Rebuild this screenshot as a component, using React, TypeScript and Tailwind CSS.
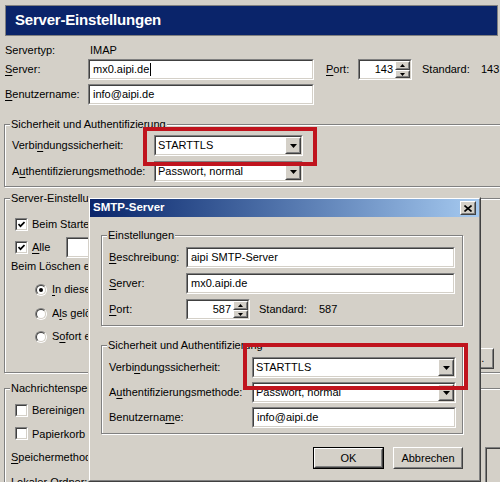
import type { ReactNode } from "react";

// Windows-classic look: 3D borders, etched group boxes, navy caption bars.

function U({ children }: { children: ReactNode }) {
  return <span className="underline underline-offset-[2px]">{children}</span>;
}

// label that is partly covered by the dialog window; only the uncovered part is drawn
function Clip({ width, children }: { width: string; children: ReactNode }) {
  return <span className={`block overflow-hidden whitespace-nowrap ${width}`}>{children}</span>;
}

function Sunken({
  className = "",
  disabled = false,
  children,
}: {
  className?: string;
  disabled?: boolean;
  children?: ReactNode;
}) {
  return (
    <div className={`border border-t-[#808080] border-l-[#808080] border-b-white border-r-white ${className}`}>
      <div
        className={`flex h-full w-full border border-t-[#404040] border-l-[#404040] border-b-[#d4d0c8] border-r-[#d4d0c8] ${
          disabled ? "bg-[#d4d0c8]" : "bg-white"
        }`}
      >
        {children}
      </div>
    </div>
  );
}

function Raised({ className = "", children }: { className?: string; children?: ReactNode }) {
  return (
    <div className={`border border-t-white border-l-white border-b-[#404040] border-r-[#404040] bg-[#d4d0c8] ${className}`}>
      <div className="flex h-full w-full items-center justify-center border border-t-[#d4d0c8] border-l-[#d4d0c8] border-b-[#808080] border-r-[#808080]">
        {children}
      </div>
    </div>
  );
}

function TextField({ value, width, caret = false }: { value: string; width: string; caret?: boolean }) {
  return (
    <Sunken className={`h-[21px] ${width}`}>
      <span className="pl-[3px] leading-[17px] whitespace-nowrap">{value}</span>
      {caret && <span className="mt-[2px] ml-[1px] h-[13px] w-px bg-black" />}
    </Sunken>
  );
}

function DownArrow() {
  return (
    <svg width="7" height="4" viewBox="0 0 7 4">
      <polygon points="0,0 7,0 3.5,4" fill="#000" />
    </svg>
  );
}

function ComboBox({ value, width }: { value: string; width: string }) {
  return (
    <Sunken className={`h-[21px] ${width}`}>
      <span className="flex-1 pl-[2px] leading-[17px] whitespace-nowrap">{value}</span>
      <Raised className="h-[17px] w-[16px]">
        <DownArrow />
      </Raised>
    </Sunken>
  );
}

function SpinBox({ value, width }: { value: string; width: string }) {
  return (
    <Sunken className={`h-[21px] ${width}`}>
      <span className="flex-1 pr-[2px] text-right leading-[17px]">{value}</span>
      <div className="flex w-[15px] flex-col">
        <Raised className="h-[9px]">
          <svg width="5" height="3" viewBox="0 0 5 3">
            <polygon points="2.5,0 5,3 0,3" fill="#000" />
          </svg>
        </Raised>
        <Raised className="h-[8px]">
          <svg width="5" height="3" viewBox="0 0 5 3">
            <polygon points="0,0 5,0 2.5,3" fill="#000" />
          </svg>
        </Raised>
      </div>
    </Sunken>
  );
}

function CheckBox({ checked }: { checked?: boolean }) {
  return (
    <Sunken className="h-[13px] w-[13px] shrink-0">
      {checked && (
        <svg className="m-auto" width="7" height="7" viewBox="0 0 7 7">
          <polyline points="0.5,3 2.5,5.2 6.5,1" fill="none" stroke="#000" strokeWidth="1.7" />
        </svg>
      )}
    </Sunken>
  );
}

function Radio({ checked }: { checked?: boolean }) {
  return (
    <div className="flex h-[12px] w-[12px] shrink-0 rounded-full border border-t-[#808080] border-l-[#808080] border-b-white border-r-white">
      <div className="flex h-full w-full items-center justify-center rounded-full border border-t-[#404040] border-l-[#404040] border-b-[#d4d0c8] border-r-[#d4d0c8] bg-white">
        {checked && <div className="h-[4px] w-[4px] rounded-full bg-black" />}
      </div>
    </div>
  );
}

function GroupBox({
  label,
  labelWidth = "",
  className = "",
  children,
}: {
  label: string;
  labelWidth?: string;
  className?: string;
  children?: ReactNode;
}) {
  return (
    <div className={`relative border border-[#808080] shadow-[inset_1px_1px_0_#fff,1px_1px_0_#fff] ${className}`}>
      <span
        className={`absolute left-[5px] -top-[8px] overflow-hidden bg-[#d4d0c8] px-[1px] leading-[14px] whitespace-nowrap ${labelWidth}`}
      >
        {label}
      </span>
      {children}
    </div>
  );
}

function PushButton({ label, primary = false }: { label: string; primary?: boolean }) {
  const btn = (
    <Raised className="h-full w-full">
      <span className="leading-[14px]">{label}</span>
    </Raised>
  );
  return primary ? (
    <div className="h-[22px] w-[71px] border border-black">{btn}</div>
  ) : (
    <div className="h-[22px] w-[70px]">{btn}</div>
  );
}

function SmtpDialog() {
  return (
    <div className="absolute left-[88px] top-[197px] h-[285px] w-[393px] border border-t-[#d4d0c8] border-l-[#d4d0c8] border-b-[#404040] border-r-[#404040]">
      <div className="flex h-full w-full flex-col border border-t-white border-l-white border-b-[#808080] border-r-[#808080] bg-[#d4d0c8]">
        <div className="flex h-[18px] items-center bg-gradient-to-r from-[#0a246a] to-[#a6caf0] pl-[3px] pr-[3px]">
          <span className="flex-1 text-[11.5px] font-bold text-white">SMTP-Server</span>
          <Raised className="h-[14px] w-[16px]">
            <svg width="8" height="7" viewBox="0 0 8 7">
              <path d="M0.5 0.5 L7.5 6.5 M7.5 0.5 L0.5 6.5" stroke="#000" strokeWidth="1.6" />
            </svg>
          </Raised>
        </div>

        <GroupBox label="Einstellungen" className="ml-[11px] mt-[18px] h-[91px] w-[362px]">
          <div className="flex flex-col gap-[5px] pl-[7px] pt-[11px]">
            <div className="flex items-center">
              <span className="w-[77px]"><U>B</U>eschreibung:</span>
              <TextField value="aipi SMTP-Server" width="w-[269px]" />
            </div>
            <div className="flex items-center">
              <span className="w-[77px]"><U>S</U>erver:</span>
              <TextField value="mx0.aipi.de" width="w-[269px]" />
            </div>
            <div className="flex items-center">
              <span className="w-[77px]"><U>P</U>ort:</span>
              <SpinBox value="587" width="w-[64px]" />
              <span className="ml-[9px] w-[60px]">Standard:</span>
              <span>587</span>
            </div>
          </div>
        </GroupBox>

        <GroupBox label="Sicherheit und Authentifizierung" className="ml-[11px] mt-[19px] h-[89px] w-[362px]">
          <div className="flex flex-col gap-[4px] pl-[7px] pt-[11px]">
            <div className="flex items-center">
              <span className="w-[143px]">Verbi<U>n</U>dungssicherheit:</span>
              <ComboBox value="STARTTLS" width="w-[204px]" />
            </div>
            <div className="flex items-center">
              <span className="w-[143px]">A<U>u</U>thentifizierungsmethode:</span>
              <ComboBox value="Passwort, normal" width="w-[204px]" />
            </div>
            <div className="flex items-center">
              <span className="w-[143px]">Benutzerna<U>m</U>e:</span>
              <TextField value="info@aipi.de" width="w-[204px]" />
            </div>
          </div>
        </GroupBox>

        <div className="mt-[13px] flex justify-end gap-[9px] pr-[16px]">
          <PushButton label="OK" primary />
          <PushButton label="Abbrechen" />
        </div>
      </div>
    </div>
  );
}

export default function App() {
  return (
    <div className="relative h-[482px] w-[500px] overflow-hidden bg-[#d4d0c8] pl-[4px] pt-[5px] font-['Liberation_Sans',Arial,sans-serif] text-[11px] text-black">
      <div className="ml-[1px] flex h-[31px] w-[493px] items-center border border-[#808080] bg-[#0a246a] pl-[9px]">
        <span className="text-[15px] font-bold tracking-[-0.2px] text-white">Server-Einstellungen</span>
      </div>

      <div className="ml-[1px] mt-[6px] flex h-[16px] items-center">
        <span className="w-[85px]">Servertyp:</span>
        <span>IMAP</span>
      </div>

      <div className="ml-[1px] mt-px flex items-center">
        <span className="w-[83px]"><U>S</U>erver:</span>
        <TextField value="mx0.aipi.de" width="w-[226px]" caret />
        <span className="ml-[12px] w-[32px]"><U>P</U>ort:</span>
        <SpinBox value="143" width="w-[54px]" />
        <span className="ml-[10px] w-[59px]">Standard:</span>
        <span>143</span>
      </div>

      <div className="ml-[1px] mt-[4px] flex items-center">
        <span className="w-[83px]"><U>B</U>enutzername:</span>
        <TextField value="info@aipi.de" width="w-[226px]" />
      </div>

      <GroupBox label="Sicherheit und Authentifizierung" className="mt-[19px] h-[63px] w-[503px]">
        <div className="flex flex-col gap-[5px] pl-[7px] pt-[10px]">
          <div className="flex items-center">
            <span className="w-[142px]">Verbi<U>n</U>dungssicherheit:</span>
            <ComboBox value="STARTTLS" width="w-[149px]" />
          </div>
          <div className="flex items-center">
            <span className="w-[142px]">A<U>u</U>thentifizierungsmethode:</span>
            <ComboBox value="Passwort, normal" width="w-[149px]" />
          </div>
        </div>
      </GroupBox>

      <GroupBox label="Server-Einstellungen" labelWidth="max-w-[79px]" className="mt-[11px] h-[175px] w-[503px]">
        <div className="flex flex-col pl-[6px] pt-[17px]">
          <div className="ml-[4px] flex items-center gap-[4px]">
            <CheckBox checked />
            <Clip width="w-[56px]">Beim Starten nach neuen Nachrichten suchen</Clip>
          </div>
          <div className="ml-[4px] mt-[5px] flex h-[20px] items-center gap-[4px]">
            <CheckBox checked />
            <span className="w-[30px]"><U>A</U>lle</span>
            <TextField value="10" width="w-[60px] [&_span]:pl-[21px]" />
          </div>
          <div className="mt-[2px] flex h-[14px] items-center">
            <Clip width="w-[77px]">Beim Löschen einer Nachricht:</Clip>
          </div>
          <div className="ml-[24px] mt-[8px] flex h-[16px] items-center gap-[5px]">
            <Radio checked />
            <Clip width="w-[36px]"><U>I</U>n diesen Ordner verschieben:</Clip>
          </div>
          <div className="ml-[24px] mt-[8px] flex h-[16px] items-center gap-[5px]">
            <Radio />
            <Clip width="w-[36px]">A<U>l</U>s gelöscht markieren</Clip>
          </div>
          <div className="ml-[24px] mt-[7px] flex h-[16px] items-center gap-[5px]">
            <Radio />
            <Clip width="w-[36px]">S<U>o</U>fort entfernen</Clip>
          </div>
          <div className="mt-[3px] flex justify-end pr-[12px]">
            <div className="h-[21px] w-[72px]">
              <Raised className="h-full w-full">
                <span className="leading-[14px]">Erweitert...</span>
              </Raised>
            </div>
          </div>
        </div>
      </GroupBox>

      <GroupBox label="Nachrichtenspeicher" labelWidth="max-w-[79px]" className="mt-[15px] h-[120px] w-[503px]">
        <div className="flex flex-col pl-[6px] pt-[13px]">
          <div className="ml-[4px] flex items-center gap-[4px]">
            <CheckBox />
            <Clip width="w-[56px]">Bereinigen (Compact) von Ordnern beim Beenden</Clip>
          </div>
          <div className="ml-[4px] mt-[7px] flex items-center gap-[4px]">
            <CheckBox />
            <Clip width="w-[56px]">Papierkorb beim Beenden leeren</Clip>
          </div>
          <div className="mt-[5px] flex h-[21px] items-center">
            <span className="w-[474px] shrink-0">
              <Clip width="w-[77px]"><U>S</U>peichermethode:</Clip>
            </span>
            {/* disabled store-type picker, mostly off to the right */}
            <Sunken disabled className="h-[45px] w-[200px] shrink-0 self-start" />
          </div>
          <div className="mt-[4px] flex h-[21px] items-center">
            <Clip width="w-[77px]">Lokaler Ordner:</Clip>
          </div>
        </div>
      </GroupBox>

      <div className="absolute left-[143px] top-[127px] h-[39px] w-[174px] border-4 border-[#c0141e]" />

      <SmtpDialog />

      <div className="absolute left-[243px] top-[343px] h-[47px] w-[225px] border-4 border-[#c0141e]" />
    </div>
  );
}
